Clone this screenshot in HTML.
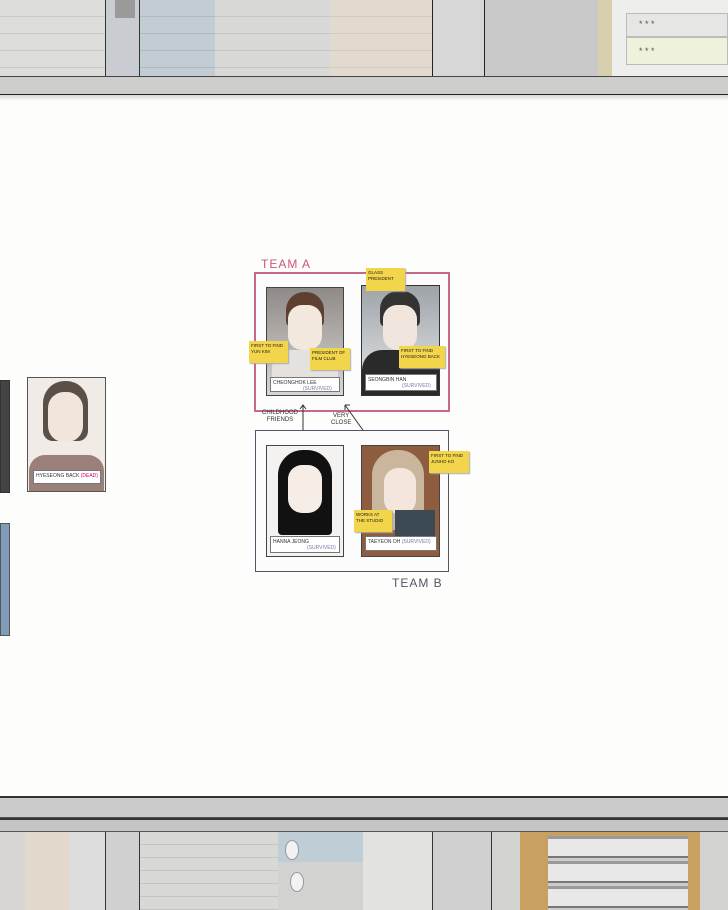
<!DOCTYPE html><html><head><style>
body{margin:0;width:728px;height:910px;position:relative;overflow:hidden;background:#fdfdfc;font-family:"Liberation Sans",sans-serif}
div{position:absolute;box-sizing:border-box}
.n{background:#f2d54a;font-size:4.5px;line-height:6px;padding:2px;color:#222;box-shadow:1px 1px 1px #aaa;white-space:nowrap;overflow:hidden}
.l{background:#fff;border:1px solid #777;font-size:5px;color:#333;padding:2px;white-space:nowrap}
</style></head><body>
<div style="left:0;top:0;width:728px;height:77px;background:#d7d7d6"></div>
<div style="left:0;top:0;width:105px;height:76px;background:repeating-linear-gradient(#dcdcdb 0 16px,#c9c9c8 16px 17px)"></div>
<div style="left:105px;top:0;width:35px;height:76px;background:#c9ccd0;border-left:1px solid #333;border-right:1px solid #333"></div>
<div style="left:115px;top:0;width:20px;height:18px;background:#9a9a9a"></div>
<div style="left:140px;top:0;width:75px;height:76px;background:repeating-linear-gradient(#c2ccd3 0 16px,#b0bac2 16px 17px)"></div>
<div style="left:215px;top:0;width:115px;height:76px;background:repeating-linear-gradient(#d8d9d7 0 16px,#c6c7c5 16px 17px)"></div>
<div style="left:330px;top:0;width:102px;height:76px;background:repeating-linear-gradient(#e2dace 0 16px,#d2cabd 16px 17px)"></div>
<div style="left:432px;top:0;width:53px;height:76px;background:#d6d7d6;border-left:1px solid #222;border-right:1px solid #222"></div>
<div style="left:485px;top:0;width:113px;height:76px;background:#c8c9c8"></div>
<div style="left:598px;top:0;width:14px;height:76px;background:#d8cfae"></div>
<div style="left:612px;top:0;width:116px;height:76px;background:#eeefec"></div>
<div style="left:626px;top:13px;width:102px;height:24px;background:#e6e7e4;border:1px solid #bbb;font-size:9px;color:#555;padding:5px 0 0 12px">* * *</div>
<div style="left:626px;top:37px;width:102px;height:28px;background:#eef2dc;border:1px solid #bbb;font-size:9px;color:#555;padding:8px 0 0 12px">* * *</div>
<div style="left:0;top:76px;width:728px;height:19px;background:#cdcdcc;border-top:1px solid #444;border-bottom:1px solid #222"></div>
<div style="left:0;top:95px;width:728px;height:6px;background:linear-gradient(#d8d8d8,#fdfdfc)"></div>
<div style="left:0;top:380px;width:10px;height:113px;background:#444;border:1px solid #333"></div>
<div style="left:0;top:523px;width:10px;height:113px;background:#7f9cb8;border:1px solid #555"></div>
<div style="left:27px;top:377px;width:79px;height:115px;background:#f0ebe6;border:1px solid #555"></div>
<div style="left:43px;top:381px;width:45px;height:60px;border-radius:22px 22px 10px 10px;background:#5a5048"></div>
<div style="left:48px;top:392px;width:35px;height:50px;border-radius:16px;background:#f2e6dc"></div>
<div style="left:29px;top:455px;width:75px;height:36px;background:#9b8079;border-radius:16px 16px 0 0"></div>
<div class="l" style="left:33px;top:470px;width:68px;height:14px;font-size:5px">HYESEONG BACK <span style="color:#c06">(DEAD)</span></div>
<div style="left:261px;top:257px;font-size:12px;color:#c9577a;letter-spacing:1px">TEAM A</div>
<div style="left:254px;top:272px;width:196px;height:140px;border:2px solid #c46a86;background:#fcfcfc"></div>
<div style="left:266px;top:287px;width:78px;height:109px;background:linear-gradient(#8e8a87,#d8d6d4);border:1px solid #444"></div>
<div style="left:286px;top:292px;width:38px;height:35px;border-radius:18px 18px 6px 6px;background:#5e4032"></div>
<div style="left:288px;top:305px;width:34px;height:45px;border-radius:14px;background:#f3e8de"></div>
<div style="left:272px;top:350px;width:66px;height:40px;background:#e4e1de;border-radius:18px 18px 0 0"></div>
<div class="l" style="left:270px;top:377px;width:70px;height:15px">CHEONGHOK LEE<br><span style="color:#77a;padding-left:30px">(SURVIVED)</span></div>
<div style="left:361px;top:285px;width:79px;height:111px;background:linear-gradient(#9ea3a8,#e8e9ea);border:1px solid #333"></div>
<div style="left:380px;top:291px;width:40px;height:36px;border-radius:18px 18px 6px 6px;background:#333"></div>
<div style="left:383px;top:305px;width:34px;height:45px;border-radius:14px;background:#f1e6dd"></div>
<div style="left:362px;top:350px;width:77px;height:45px;background:#2a2a2a;border-radius:20px 20px 0 0"></div>
<div class="l" style="left:365px;top:374px;width:72px;height:17px">SEONGBIN HAN<br><span style="color:#77a;padding-left:34px">(SURVIVED)</span></div>
<div class="n" style="left:366px;top:268px;width:39px;height:23px">GLASS<br>PRESIDENT</div>
<div class="n" style="left:249px;top:341px;width:39px;height:22px">FIRST TO FIND<br>YUN KIM</div>
<div class="n" style="left:310px;top:348px;width:40px;height:22px">PRESIDENT OF<br>FILM CLUB</div>
<div class="n" style="left:399px;top:346px;width:46px;height:22px">FIRST TO FIND<br>HYESEONG BACK</div>
<div style="left:262px;top:410px;font-size:6px;color:#333;text-align:center;line-height:7px">CHILDHOOD<br>FRIENDS</div>
<div style="left:331px;top:413px;font-size:6px;color:#333;text-align:center;line-height:7px">VERY<br>CLOSE</div>
<svg style="position:absolute;left:290px;top:402px" width="90" height="42"><path d="M13 3V38M10 7L13 3 16 7M10 34L13 38 16 34M55 3L80 38M55 3V8M55 3H60M80 38H75M80 38V33" stroke="#333" fill="none" stroke-width="1"/></svg>
<div style="left:255px;top:430px;width:194px;height:142px;border:1px solid #556;background:#fcfcfc"></div>
<div style="left:266px;top:445px;width:78px;height:112px;background:#f3f2f0;border:1px solid #444"></div>
<div style="left:278px;top:450px;width:54px;height:85px;border-radius:25px 25px 4px 4px;background:#111"></div>
<div style="left:288px;top:465px;width:34px;height:48px;border-radius:14px;background:#f6ede6"></div>
<div class="l" style="left:270px;top:536px;width:70px;height:17px">HANNA JEONG<br><span style="color:#77a;padding-left:34px">(SURVIVED)</span></div>
<div style="left:361px;top:445px;width:79px;height:112px;background:#8e5c3e;border:1px solid #444"></div>
<div style="left:372px;top:450px;width:52px;height:80px;border-radius:25px 25px 8px 8px;background:#c9b69c"></div>
<div style="left:384px;top:468px;width:32px;height:46px;border-radius:14px;background:#f4e6dc"></div>
<div style="left:395px;top:510px;width:40px;height:30px;background:#3b4a55"></div>
<div class="l" style="left:365px;top:536px;width:72px;height:15px">TAEYEON OH <span style="color:#77a">(SURVIVED)</span></div>
<div class="n" style="left:429px;top:451px;width:40px;height:22px">FIRST TO FIND<br>JUNHO KO</div>
<div class="n" style="left:354px;top:510px;width:38px;height:22px">WORKS AT<br>THE STUDIO</div>
<div style="left:392px;top:576px;font-size:12px;color:#556;letter-spacing:1px">TEAM B</div>
<div style="left:0;top:796px;width:728px;height:2px;background:#333"></div>
<div style="left:0;top:798px;width:728px;height:20px;background:#cbcbcb;border-bottom:1px solid #555"></div>
<div style="left:0;top:818px;width:728px;height:14px;background:#c5c5c5;border-top:2px solid #333;border-bottom:1px solid #555"></div>
<div style="left:0;top:832px;width:728px;height:78px;background:#d2d2d1"></div>
<div style="left:0;top:832px;width:105px;height:78px;background:repeating-linear-gradient(90deg,#d7d6d3 0 25px,#e2d8cc 25px 70px,#ddd 70px 105px)"></div>
<div style="left:105px;top:832px;width:35px;height:78px;background:#d0d0d0;border-left:1px solid #333;border-right:1px solid #333"></div>
<div style="left:140px;top:832px;width:138px;height:78px;background:repeating-linear-gradient(#d8d8d5 0 12px,#c4c4c2 12px 13px)"></div>
<div style="left:278px;top:832px;width:85px;height:30px;background:#bfcdd6"></div>
<div style="left:285px;top:840px;width:14px;height:20px;border-radius:50%;background:#f2f2f2;border:1px solid #999"></div>
<div style="left:290px;top:872px;width:14px;height:20px;border-radius:50%;background:#f2f2f2;border:1px solid #999"></div>
<div style="left:363px;top:832px;width:70px;height:78px;background:#e2e2e1"></div>
<div style="left:432px;top:832px;width:60px;height:78px;background:#d0d0d0;border-left:1px solid #333;border-right:1px solid #333"></div>
<div style="left:520px;top:832px;width:180px;height:78px;background:#c8a060"></div>
<div style="left:548px;top:836px;width:140px;height:74px;background:repeating-linear-gradient(#9a9a9a 0 3px,#e8e8e8 3px 20px,#777 20px 22px,#ccc 22px 25px)"></div>
</body></html>
